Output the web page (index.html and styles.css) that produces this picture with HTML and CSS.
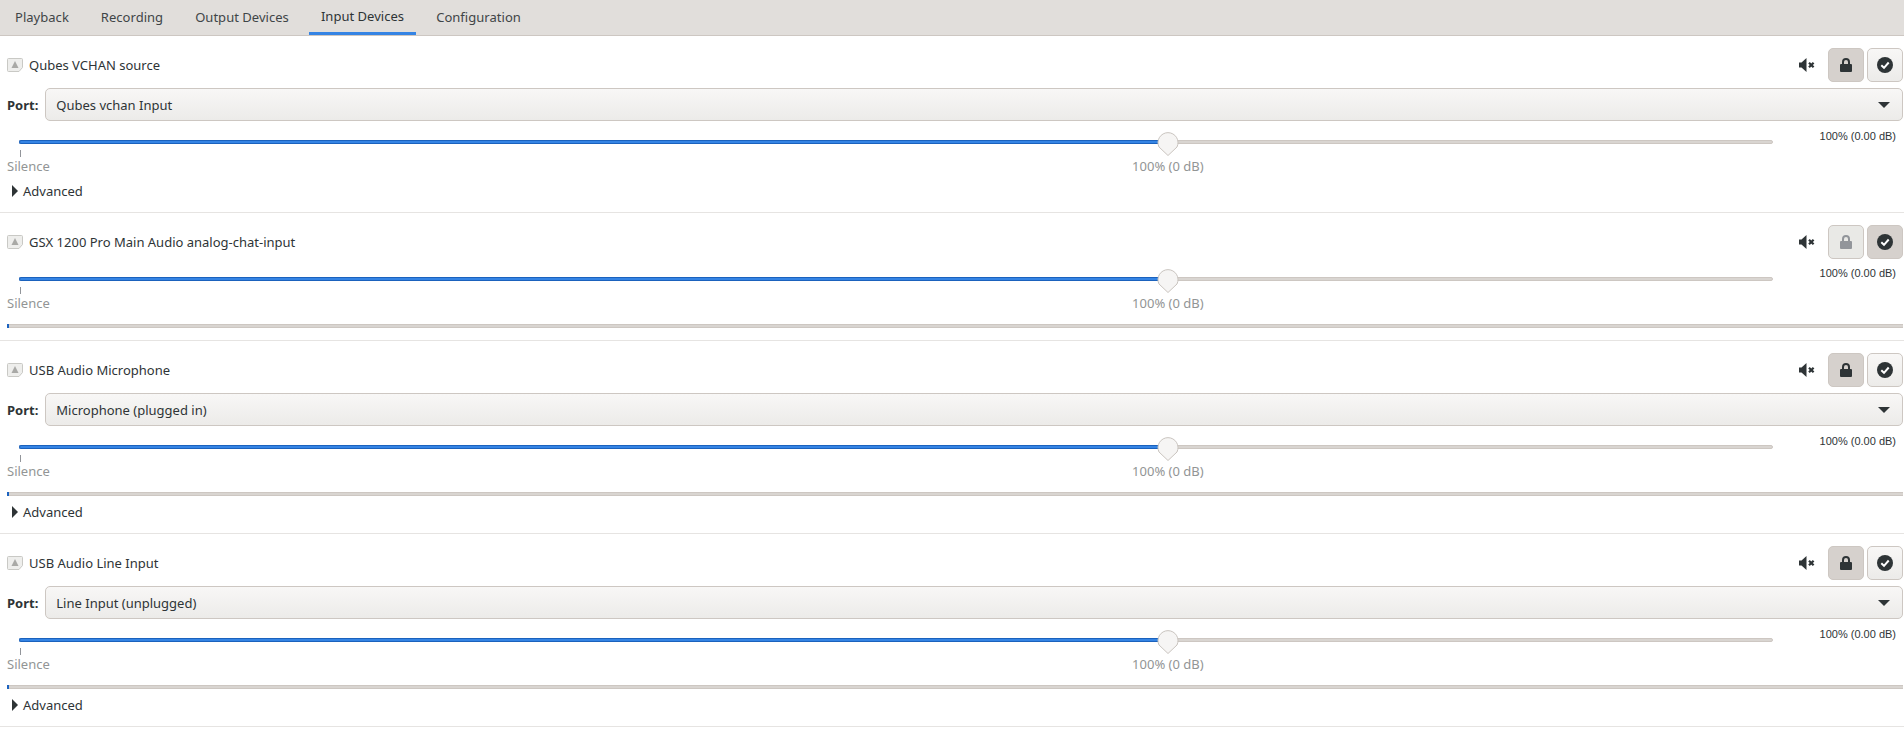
FILE: index.html
```html
<!DOCTYPE html>
<html lang="en">
<head>
    <meta charset="UTF-8">
    <title>Volume Control</title>
    <link rel="stylesheet" href="styles.css">
</head>
<body>
    <svg class="sprite" width="0" height="0">
        <symbol id="dev" viewBox="0 0 16 14">
            <path d="M1.5 .5h13a1 1 0 0 1 1 1v8l-3.500 4h-10.500a1 1 0 0 1-1-1v-11a1 1 0 0 1 1-1z" fill="#eeeeec" stroke="#c9c9c5"/>
            <path d="M8 3l3.500 7h-7z" fill="#a9a9a6"/>
        </symbol>
        <symbol id="mute" viewBox="0 0 16 14">
            <path d="M0 4.500h2.500l5-4.500v14l-5-4.500h-2.500z" fill="#2e3436"/>
            <path d="M10 4.700l4.600 4.600m0-4.600l-4.600 4.600" stroke="#2e3436" stroke-width="2.200" fill="none"/>
        </symbol>
        <symbol id="lock" viewBox="0 0 12 14">
            <path d="M3 7v-3a3 3 0 0 1 6 0v3" stroke="currentColor" stroke-width="2" fill="none"/>
            <rect y="6" width="12" height="8" rx="1" fill="currentColor"/>
        </symbol>
        <symbol id="check" viewBox="0 0 16 16">
            <circle cx="8" cy="8" r="8" fill="#2e3436"/>
            <path d="M4.300 8.300l2.700 2.500 4.700-5.300" stroke="#fff" stroke-width="2" fill="none"/>
        </symbol>
    </svg>

    <nav class="tabs">
        <a class="tab">Playback</a>
        <a class="tab">Recording</a>
        <a class="tab">Output Devices</a>
        <a class="tab active">Input Devices</a>
        <a class="tab">Configuration</a>
    </nav>

    <!-- Qubes source -->
    <section class="device">
        <div class="head">
            <svg class="dev-icon"><use href="#dev"/></svg>
            <span class="name">Qubes VCHAN source</span>
            <svg class="mute-icon"><use href="#mute"/></svg>
            <button class="btn pressed"><svg class="lock-icon"><use href="#lock"/></svg></button>
            <button class="btn"><svg class="check-icon"><use href="#check"/></svg></button>
        </div>
        <div class="port">
            <b>Port:</b>
            <div class="combo">Qubes vchan Input<i class="arrow"></i></div>
        </div>
        <div class="volume">
            <div class="slider">
                <div class="track"><div class="fill"></div></div>
                <svg class="thumb" viewBox="0 0 22 25"><path d="M11 24.500l-9-8.500a10 10 0 1 1 18 0z" fill="#f6f5f4" stroke="#c9c4bf"/></svg>
                <span class="tick"></span>
                <span class="mark silence">Silence</span>
                <span class="mark full">100% (0 dB)</span>
            </div>
            <span class="value">100% (0.00 dB)</span>
        </div>
        <div class="advanced first"><i class="expander"></i>Advanced</div>
    </section>

    <!-- GSX, no port -->
    <section class="device">
        <div class="head">
            <svg class="dev-icon"><use href="#dev"/></svg>
            <span class="name">GSX 1200 Pro Main Audio analog-chat-input</span>
            <svg class="mute-icon"><use href="#mute"/></svg>
            <button class="btn disabled"><svg class="lock-icon"><use href="#lock"/></svg></button>
            <button class="btn pressed"><svg class="check-icon"><use href="#check"/></svg></button>
        </div>
        <div class="volume flush">
            <div class="slider">
                <div class="track"><div class="fill"></div></div>
                <svg class="thumb" viewBox="0 0 22 25"><path d="M11 24.500l-9-8.500a10 10 0 1 1 18 0z" fill="#f6f5f4" stroke="#c9c4bf"/></svg>
                <span class="tick"></span>
                <span class="mark silence">Silence</span>
                <span class="mark full">100% (0 dB)</span>
            </div>
            <span class="value">100% (0.00 dB)</span>
        </div>
        <div class="level"><div class="level-fill"></div></div>
    </section>

    <!-- USB mic -->
    <section class="device">
        <div class="head">
            <svg class="dev-icon"><use href="#dev"/></svg>
            <span class="name">USB Audio Microphone</span>
            <svg class="mute-icon"><use href="#mute"/></svg>
            <button class="btn pressed"><svg class="lock-icon"><use href="#lock"/></svg></button>
            <button class="btn"><svg class="check-icon"><use href="#check"/></svg></button>
        </div>
        <div class="port">
            <b>Port:</b>
            <div class="combo">Microphone (plugged in)<i class="arrow"></i></div>
        </div>
        <div class="volume">
            <div class="slider">
                <div class="track"><div class="fill"></div></div>
                <svg class="thumb" viewBox="0 0 22 25"><path d="M11 24.500l-9-8.500a10 10 0 1 1 18 0z" fill="#f6f5f4" stroke="#c9c4bf"/></svg>
                <span class="tick"></span>
                <span class="mark silence">Silence</span>
                <span class="mark full">100% (0 dB)</span>
            </div>
            <span class="value">100% (0.00 dB)</span>
        </div>
        <div class="level"><div class="level-fill"></div></div>
        <div class="advanced tight"><i class="expander"></i>Advanced</div>
    </section>

    <!-- USB line in -->
    <section class="device">
        <div class="head">
            <svg class="dev-icon"><use href="#dev"/></svg>
            <span class="name">USB Audio Line Input</span>
            <svg class="mute-icon"><use href="#mute"/></svg>
            <button class="btn pressed"><svg class="lock-icon"><use href="#lock"/></svg></button>
            <button class="btn"><svg class="check-icon"><use href="#check"/></svg></button>
        </div>
        <div class="port">
            <b>Port:</b>
            <div class="combo">Line Input (unplugged)<i class="arrow"></i></div>
        </div>
        <div class="volume">
            <div class="slider">
                <div class="track"><div class="fill"></div></div>
                <svg class="thumb" viewBox="0 0 22 25"><path d="M11 24.500l-9-8.500a10 10 0 1 1 18 0z" fill="#f6f5f4" stroke="#c9c4bf"/></svg>
                <span class="tick"></span>
                <span class="mark silence">Silence</span>
                <span class="mark full">100% (0 dB)</span>
            </div>
            <span class="value">100% (0.00 dB)</span>
        </div>
        <div class="level"><div class="level-fill"></div></div>
        <div class="advanced tight"><i class="expander"></i>Advanced</div>
    </section>
</body>
</html>
```
FILE: styles.css
```css
html, body {
    height: 100%;
    overflow: hidden;
}
body {
    margin: 0;
    background-color: #fff;
    color: #2e3436;
    font-family: "Noto Sans", sans-serif;
    font-size: 13px;
}
.sprite {
    position: absolute;
}

/* tabs */
.tabs {
    display: flex;
    gap: 8px;
    height: 35px;
    padding-left: 3px;
    background-color: #e1dedb;
    border-bottom: 1px solid #cdc7c2;
}
.tab {
    display: flex;
    align-items: center;
    height: 35px;
    padding: 0 12px 1px;
    box-sizing: border-box;
    color: #3f4547;
    letter-spacing: .03px;
}
.tab.active {
    color: #2e3436;
    border-bottom: 3px solid #3584e4;
    padding-bottom: 0;
    padding-top: 0;
}

/* one device block */
.device {
    padding: 12px 1px 0 7px;
    border-bottom: 1px solid #e6e4e2;
}
.head {
    display: flex;
    align-items: center;
    height: 34px;
}
.dev-icon {
    width: 16px;
    height: 14px;
    margin-right: 6px;
}
.name {
    flex: 1;
}
.mute-icon {
    width: 16px;
    height: 14px;
    margin-right: 13px;
}
.btn {
    display: flex;
    align-items: center;
    justify-content: center;
    width: 36px;
    height: 34px;
    margin-left: 3px;
    padding: 0;
    border: 1px solid #cdc7c2;
    border-radius: 5px;
    background: linear-gradient(#f8f7f6, #ecebe9);
    color: #2e3436;
}
.btn:first-of-type {
    margin-left: 0;
}
.btn.pressed {
    background: #d6d1cd;
}
.btn.disabled {
    background: #e9e9e6;
    color: #92959a;
}
.lock-icon {
    width: 12px;
    height: 14px;
}
.check-icon {
    width: 16px;
    height: 16px;
}

/* port combo */
.port {
    display: flex;
    align-items: center;
    gap: 7px;
    margin-top: 6px;
}
.combo {
    position: relative;
    flex: 1;
    height: 33px;
    line-height: 32px;
    padding-left: 10px;
    box-sizing: border-box;
    border: 1px solid #cdc7c2;
    border-radius: 5px;
    background: linear-gradient(#f8f7f6, #ecebe9);
}
.arrow {
    position: absolute;
    right: 12px;
    top: 13px;
    border-top: 6px solid #2e3436;
    border-left: 6.500px solid transparent;
    border-right: 6.500px solid transparent;
}

/* volume slider */
.volume {
    display: flex;
    margin-top: 15px;
    height: 46px;
}
.volume.flush {
    margin-top: 14px;
}
.slider {
    position: relative;
    margin-left: 12px;
    width: 1754px;
}
.track {
    margin-top: 4px;
    height: 4px;
    box-sizing: border-box;
    border-radius: 2px;
    background-color: #d9d5d1;
    border: 1px solid #cdc7c2;
    position: relative;
}
.fill {
    position: absolute;
    left: -1px;
    top: -1px;
    width: 65.5%;
    height: 4px;
    box-sizing: border-box;
    border-radius: 2px 0 0 2px;
    background-color: #3584e4;
    border: 1px solid #1b62bd;
    border-right: 0;
}
.thumb {
    position: absolute;
    left: 65.5%;
    top: -5px;
    width: 22px;
    height: 25px;
    margin-left: -11px;
}
.tick {
    position: absolute;
    left: 1px;
    top: 14px;
    width: 1px;
    height: 7px;
    background-color: #92959a;
}
.mark {
    position: absolute;
    top: 21px;
    color: #929595;
    line-height: 18px;
    white-space: nowrap;
}
.silence {
    left: -12px;
}
.full {
    left: 65.5%;
    transform: translateX(-50%);
}
.value {
    flex: 1;
    text-align: right;
    padding-right: 7px;
    font-family: "Liberation Sans", sans-serif;
    font-size: 11px;
    line-height: 13px;
    margin-top: -6px;
}

/* level meter */
.level {
    height: 4px;
    margin-top: 5px;
    margin-bottom: 12px;
    background-color: #d9d5d1;
    border: 1px solid #cdc7c2;
    border-width: 1px 0;
    box-sizing: border-box;
    position: relative;
}
.level-fill {
    position: absolute;
    left: 0;
    top: -1px;
    width: 2px;
    height: 4px;
    background-color: #1c63c0;
}

/* expander */
.advanced {
    display: flex;
    align-items: center;
    height: 20px;
    margin-bottom: 11px;
    padding-left: 5px;
}
.advanced.first {
    margin-top: -1px;
}
.advanced.tight {
    margin-top: -6px;
}
.expander {
    margin-right: 5px;
    border-left: 6px solid #2e3436;
    border-top: 6px solid transparent;
    border-bottom: 6px solid transparent;
}
```
